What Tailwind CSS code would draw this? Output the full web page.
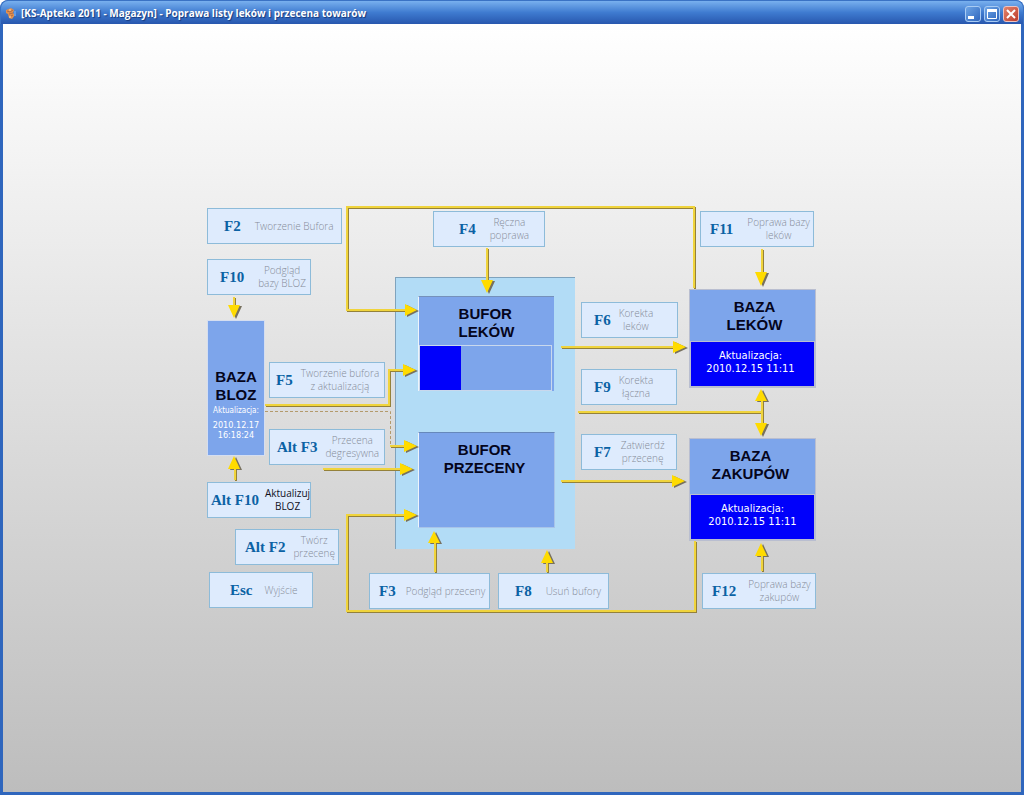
<!DOCTYPE html>
<html lang="pl">
<head>
<meta charset="utf-8">
<title>[KS-Apteka 2011 - Magazyn] - Poprawa listy leków i przecena towarów</title>
<script src="https://cdn.jsdelivr.net/npm/@tailwindcss/browser@4"></script>
</head>
<body class="bg-white">
<div class="flex min-h-screen flex-col overflow-hidden rounded-t-lg bg-[#2f66bd] font-['Liberation_Sans',sans-serif]">
  <header class="flex h-6 shrink-0 items-center gap-1 rounded-t-lg border border-b-0 border-[#3a72c4] bg-linear-to-b from-[#79b0ee] via-[#3f7bd0] to-[#2857ae] pt-0.5 pr-1 pl-1">
    <svg class="size-3 shrink-0" viewBox="0 0 12 12" aria-hidden="true">
      <path d="M1 2 6 0 9 2 8 5 10 7 7 11 4 10 3 6 1 5z" fill="#e2904e"/>
      <path d="M2 3 5 4 8 2M4 6 8 5M6 8 8 7" stroke="#b06a45" fill="none"/>
      <path d="M4 2 6 2M5 8v2" stroke="#ffd6a0" fill="none"/>
      <path d="M9 3h2v5H9z" fill="#5d9bea"/>
    </svg>
    <h1 class="flex-1 whitespace-nowrap font-['Open_Sans'] text-[10px] font-bold text-white [text-shadow:1px_1px_1px_#16397c]">[KS-Apteka 2011 - Magazyn] - Poprawa listy leków i przecena towarów</h1>
    <div class="flex gap-[3px]">
      <button aria-label="Minimalizuj" class="size-4 rounded-[3px] border border-[#a8cbf3] bg-linear-to-br from-[#6ea5e6] to-[#2f66bd]"><svg viewBox="0 0 14 14" aria-hidden="true"><path d="M2 10.500h6" stroke="#fff" stroke-width="3"/></svg></button>
      <button aria-label="Maksymalizuj" class="size-4 rounded-[3px] border border-[#a8cbf3] bg-linear-to-br from-[#6ea5e6] to-[#2f66bd]"><svg viewBox="0 0 14 14" aria-hidden="true"><path d="M2.500 4v7.500h9V4" stroke="#fff" fill="none"/><path d="M2 3.500h10" stroke="#fff" stroke-width="3"/></svg></button>
      <button aria-label="Zamknij" class="size-4 rounded-[3px] border border-[#eec3c0] bg-linear-to-br from-[#e2836c] to-[#bd3a2c]"><svg viewBox="0 0 14 14" aria-hidden="true"><path d="m3 3 8 8M11 3l-8 8" stroke="#fff" stroke-width="2"/></svg></button>
    </div>
  </header>
  <main class="mx-[3px] mb-[3px] flex flex-1 items-center justify-center bg-linear-to-b from-white to-[#bdbdbd]">
    <div class="relative h-[408px] w-[610px] shrink-0">

      <section class="absolute top-[73px] left-[188px] h-[272px] w-[180px] border-t border-l border-[#7fa3bd] bg-[#b2dcf6]"></section>

      <section class="absolute top-[116px] left-0 flex h-[136px] w-[58px] flex-col items-center border border-[#d5def0] bg-[#7da5eb] pt-[47px] text-center">
        <h2 class="text-[15px] leading-[18px] font-bold text-[#05051c]">BAZA<br>BLOZ</h2>
        <p class="pt-0.5 font-['DejaVu_Sans_Condensed','DejaVu_Sans'] text-[8px] leading-[10px] text-white">Aktualizacja:</p>
        <p class="pt-1 font-['DejaVu_Sans_Condensed','DejaVu_Sans'] text-[9px] leading-[10px] text-white">2010.12.17<br>16:18:24</p>
      </section>

      <section class="absolute top-[92px] left-[211px] flex h-[95px] w-[136px] flex-col border-t border-l border-t-[#7591bb] border-l-[#edf4fc] bg-[#7da5eb]">
        <h2 class="mx-auto flex-1 pt-2 text-[15px] leading-[18px] font-bold text-[#05051c]">BUFOR<br>LEKÓW</h2>
        <div role="progressbar" aria-label="Bufor leków" aria-valuenow="31" class="mr-0.5 h-[46px] border border-[#c9d8ed]"><div class="h-full bg-[#0000fb]" style="width:31%"></div></div>
      </section>

      <section class="absolute top-[228px] left-[211px] h-[96px] w-[137px] border border-t-[#6688bb] border-r-[#a8c4e8] border-b-[#a8c4e8] border-l-[#edf4fc] bg-[#7da5eb] pt-2 pr-1 text-center">
        <h2 class="text-[15px] leading-[18px] font-bold text-[#05051c]">BUFOR<br>PRZECENY</h2>
      </section>

      <section class="absolute top-[85px] left-[482px] flex h-[99px] w-[127px] flex-col border border-[#b9bed0] bg-[#7da5eb] text-center">
        <h2 class="flex-1 pt-2 pl-1 text-[15px] leading-[18px] font-bold text-[#05051c]">BAZA<br>LEKÓW</h2>
        <p class="flex h-[46px] items-center justify-center border border-[#b9bed0] bg-[#0000fb] pr-1 pb-1 font-['DejaVu_Sans_Condensed','DejaVu_Sans'] text-[11px] leading-[13px] text-white">Aktualizacja:<br>2010.12.15 11:11</p>
      </section>

      <section class="absolute top-[234px] left-[482px] flex h-[103px] w-[127px] flex-col border border-[#b9bed0] bg-[#7da5eb] text-center">
        <h2 class="flex-1 pt-2 pr-1 text-[15px] leading-[18px] font-bold text-[#05051c]">BAZA<br>ZAKUPÓW</h2>
        <p class="flex h-[46px] items-center justify-center border border-[#b9bed0] bg-[#0000fb] pb-1 font-['DejaVu_Sans_Condensed','DejaVu_Sans'] text-[11px] leading-[13px] text-white">Aktualizacja:<br>2010.12.15 11:11</p>
      </section>

      <svg class="pointer-events-none absolute inset-0 size-full overflow-visible" viewBox="207 204 610 408" aria-hidden="true">
        <defs>
          <g id="lines" fill="none" stroke-width="2">
            <path d="M694 288V207H347V310H407"/>
            <path d="M487 248V282M234 297V308M235 480V467"/>
            <path d="M265 405H389V370H405M390 446H406M323 469H402"/>
            <path d="M695 541V611H347V515H407"/>
            <path d="M435 572V542M547 572V561M561 347H675M561 481H674M578 412H762M762 398V427M762 249V274M762 571V554"/>
          </g>
          <g id="heads">
            <path d="M405 304V316L417 310zM403 364V376L416 370zM404 440V452L417 446zM400 463V475L413 469zM404 509V521L417 515z"/>
            <path d="M673 341V353L686 347zM672 475V487L685 481z"/>
            <path d="M481 280H493L487 293zM228 305H240L234 318zM755 272H767L761 286zM755 423H767L761 436z"/>
            <path d="M228 469H240L234 456zM428 543H440L434 531zM541 563H553L547 550zM755 401H767L761 389zM755 556H767L761 543z"/>
          </g>
        </defs>
        <path d="M265 411.500H390.500V444" fill="none" stroke="#b39a6c" stroke-dasharray="3 2"/>
        <use href="#lines" x="1" y="1" stroke="#94813a"/>
        <use href="#heads" x="2" y="1" fill="#77715f"/>
        <use href="#lines" stroke="#f0d43c"/>
        <use href="#heads" fill="#ffdb00"/>
      </svg>

      <nav class="font-['Open_Sans'] text-[10px] leading-[13px] font-light whitespace-nowrap text-[#868b99] [&_b]:font-['Liberation_Serif'] [&_b]:text-[15px] [&_b]:font-bold [&_b]:text-[#0b62a4] [&_button]:absolute [&_button]:flex [&_button]:h-9 [&_button]:items-center [&_button]:border [&_button]:border-[#8dbbd9] [&_button]:bg-[#deebfd]">
        <button class="top-1 left-0 w-[135px] gap-3.5 pl-4"><b>F2</b><span>Tworzenie Bufora</span></button>
        <button class="top-[55px] left-0 w-[104px] gap-3.5 pl-3"><b>F10</b><span>Podgląd<br>bazy BLOZ</span></button>
        <button class="top-[158px] left-[62px] w-[116px] gap-2 pl-1.5"><b>F5</b><span>Tworzenie bufora<br>z aktualizacją</span></button>
        <button class="top-[225px] left-[62px] w-[116px] gap-2 pl-[7px]"><b>Alt F3</b><span>Przecena<br>degresywna</span></button>
        <button class="top-[278px] left-0 w-[104px] gap-1.5 pl-[3px]"><b>Alt F10</b><span class="font-normal text-[#10101c]">Aktualizuj<br>BLOZ</span></button>
        <button class="top-[325px] left-[28px] w-[104px] gap-2 pl-[9px]"><b>Alt F2</b><span>Twórz<br>przecenę</span></button>
        <button class="top-[368px] left-0.5 w-[104px] gap-3 pl-5"><b>Esc</b><span>Wyjście</span></button>
        <button class="top-[369px] left-[162px] w-[121px] gap-2.5 pl-[9px]"><b>F3</b><span>Podgląd przeceny</span></button>
        <button class="top-[369px] left-[291px] w-[111px] gap-3.5 pl-4"><b>F8</b><span>Usuń bufory</span></button>
        <button class="top-[7px] left-[226px] w-[112px] gap-3.5 pl-[25px]"><b>F4</b><span>Ręczna<br>poprawa</span></button>
        <button class="top-[98px] left-[374px] w-[97px] gap-2 pl-3"><b>F6</b><span>Korekta<br>leków</span></button>
        <button class="top-[165px] left-[374px] w-[96px] gap-2 pl-3"><b>F9</b><span>Korekta<br>łączna</span></button>
        <button class="top-[230px] left-[374px] w-[96px] gap-2.5 pl-3"><b>F7</b><span>Zatwierdź<br>przecenę</span></button>
        <button class="top-[7px] left-[493px] w-[114px] gap-3.5 pl-[9px]"><b>F11</b><span>Poprawa bazy<br>leków</span></button>
        <button class="top-[369px] left-[495px] w-[114px] gap-3 pl-[9px]"><b>F12</b><span>Poprawa bazy<br>zakupów</span></button>
      </nav>
    </div>
  </main>
</div>
</body>
</html>
